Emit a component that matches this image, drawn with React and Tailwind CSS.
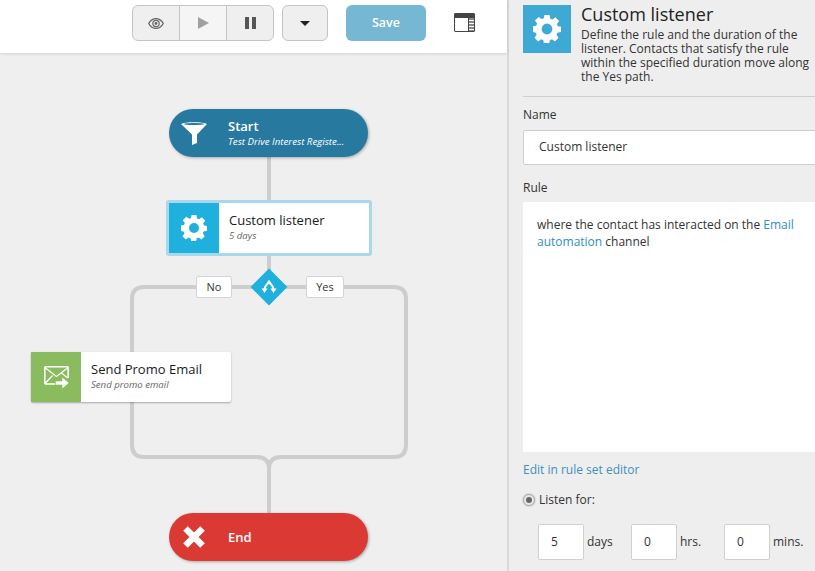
import React from 'react';

const font = { fontFamily: '"Open Sans", sans-serif' };

const Gear = ({ className }) => (
  <svg viewBox="0 0 26 26" className={className} fill="currentColor">
    <path
      fillRule="evenodd"
      d="M10.600 0h4.800l.6 3.400 2 .8 2.800-2 3.400 3.400-2 2.800.8 2 3 .6v4.800l-3.400.6-.8 2 2 2.800-3.400 3.400-2.800-2-2 .8-.6 3.400h-4.800l-.6-3.400-2-.8-2.800 2-3.400-3.400 2-2.800-.8-2-3-.6V10.600l3.400-.6.8-2-2-2.800 3.400-3.400 2.800 2 2-.8zM13 8a5 5 0 1 0 0 10 5 5 0 0 0 0-10z"
    />
  </svg>
);

const Funnel = () => (
  <svg viewBox="0 0 26 24" className="h-[24px] w-[26px]" fill="#fff">
    <path d="M0 3C3 .6 23 .6 26 3L16 13.500V22l-5 2V13.500z" />
    <ellipse cx="13" cy="3" rx="10" ry="1" fill="#27799f" />
  </svg>
);

const Branch = () => (
  <svg viewBox="0 0 16 16" className="h-[16px] w-[16px]" fill="none" stroke="#fff" strokeWidth="2">
    <path d="M8 1.500C8 5 3.500 6 3.500 10M8 1.500c0 3.500 4.500 4.500 4.500 8.500" />
    <path d="M.5 9.500h6L3.500 14zM9.500 9.500h6L12.500 14z" fill="#fff" stroke="none" />
  </svg>
);

const MailSend = () => (
  <svg viewBox="0 0 25 23" className="h-[23px] w-[25px]" fill="none" stroke="#fff" strokeWidth="1.600">
    <path d="M12 18H1.800a1 1 0 0 1-1-1V1.800a1 1 0 0 1 1-1h21.400a1 1 0 0 1 1 1V12" />
    <path d="M1.500 2l11 8.500L23.500 2M1.500 17l7-7.500M23.500 12l-6.500-5.500" strokeWidth="1.200" />
    <path d="M11.500 15h6.500v-4l7 6-7 6v-4h-6.500z" fill="#fff" stroke="#8abb5e" strokeWidth=".6" />
  </svg>
);

const EyeIcon = () => (
  <svg viewBox="0 0 16 11" className="h-[11px] w-[16px]" fill="none" stroke="#666">
    <path d="M.7 5.500C3 1.500 5.500.6 8 .6s5 .9 7.300 4.900C13 9.500 10.500 10.400 8 10.400S3 9.500.7 5.500z" strokeWidth="1.300" />
    <circle cx="8" cy="5.500" r="3.200" strokeWidth="1.200" />
    <circle cx="8" cy="5.500" r="1.400" fill="#666" stroke="none" />
  </svg>
);

// node on the flow canvas
const ActionNode = ({ className, iconBg, icon, title, sub }) => (
  <div className={`absolute flex bg-white ${className}`}>
    <div className={`flex w-[50px] shrink-0 items-center justify-center ${iconBg}`}>{icon}</div>
    <div className="flex flex-col pl-[10px] pt-[8px]">
      <span className="text-[13px] leading-[18px] text-[#1a1a1a]">{title}</span>
      <span className="text-[9.600px] italic leading-[14px] text-[#666]">{sub}</span>
    </div>
  </div>
);

const BranchLabel = ({ className, children }) => (
  <div className={`absolute top-[223px] flex h-[22px] items-center justify-center rounded-[2px] border border-[#d4d4d4] bg-white text-[11px] text-[#333] ${className}`}>
    {children}
  </div>
);

const TimeField = ({ value, unit, unitWidth }) => (
  <div className="flex items-center">
    <div className="flex h-[36px] w-[46px] items-center rounded-[2px] border border-[#d0d0d0] bg-white pl-[12px] text-[12px] text-[#333]">
      {value}
    </div>
    <span className={`pl-[3px] text-[12px] text-[#333] ${unitWidth}`}>{unit}</span>
  </div>
);

export default function App() {
  return (
    <div className="flex h-[571px] w-[815px] overflow-hidden bg-[#efefef]" style={font}>
      <div className="flex w-[507px] shrink-0 flex-col">
        <div className="z-10 flex h-[53px] shrink-0 items-start bg-white pl-[132px] pt-[5px] shadow-[0_1px_3px_rgba(0,0,0,0.12)]">
          <div className="flex h-[36px] w-[142px] overflow-hidden rounded-[6px] border border-[#c4c4c4] bg-[#efefef]">
            <div className="flex w-[47px] items-center justify-center border-r border-[#c4c4c4]">
              <EyeIcon />
            </div>
            <div className="flex w-[47px] items-center justify-center border-r border-[#c4c4c4] bg-[#f5f5f5]">
              <svg viewBox="0 0 11 12" className="h-[12px] w-[11px]" fill="#a0a0a0">
                <path d="M0 0l11 6-11 6z" />
              </svg>
            </div>
            <div className="flex flex-1 items-center justify-center">
              <svg viewBox="0 0 11 12" className="h-[12px] w-[11px]" fill="#555">
                <path d="M0 0h4v12H0zM7 0h4v12H7z" />
              </svg>
            </div>
          </div>
          <div className="ml-[8px] flex h-[36px] w-[46px] items-center justify-center rounded-[6px] border border-[#c4c4c4] bg-[#efefef]">
            <div className="h-0 w-0 border-x-[5.500px] border-t-[5px] border-x-transparent border-t-[#222]" />
          </div>
          <div className="ml-[18px] flex h-[36px] w-[80px] items-center justify-center rounded-[6px] bg-[#76b7d4] text-[12.500px] font-semibold text-white">
            Save
          </div>
          <div className="ml-[28px] mt-[8px] flex h-[19px] w-[21px] flex-col rounded-[1px] border border-[#444] bg-white">
            <div className="h-[4px] bg-[#444]" />
            <div className="ml-auto w-[6px] flex-1 border-l border-[#444] bg-[repeating-linear-gradient(#888_0,#888_2px,#fff_2px,#fff_3px)]" />
          </div>
        </div>

        <div className="relative flex-1">
          <svg className="absolute inset-0 h-full w-full" fill="none" stroke="#cdcdcd" strokeWidth="4">
            <path d="M269 100V234" />
            <path d="M269 234H144Q132 234 132 246V392Q132 404 144 404H257Q269 404 269 416V462" />
            <path d="M269 234H394Q406 234 406 246V392Q406 404 394 404H281Q269 404 269 416" />
          </svg>

          <div className="absolute left-[169px] top-[56px] flex h-[48px] w-[199px] items-center rounded-[24px] bg-[#27799f] pl-[12px] shadow-[1px_1px_3px_rgba(0,0,0,0.3)]">
            <Funnel />
            <div className="flex flex-col pb-[1px] pl-[21px] text-white">
              <span className="text-[13px] font-semibold leading-[17px]">Start</span>
              <span className="text-[9.700px] italic leading-[13px]">Test Drive Interest Registe...</span>
            </div>
          </div>

          <ActionNode
            className="left-[166px] top-[147px] h-[56px] w-[206px] rounded-[3px] border-[3px] border-[#a8d8ec]"
            iconBg="bg-[#1fb0dd]"
            icon={<Gear className="h-[26px] w-[26px] text-white" />}
            title="Custom listener"
            sub="5 days"
          />

          <div className="absolute left-[251px] top-[216px] flex h-[36px] w-[36px] items-center justify-center">
            <div className="absolute h-[26px] w-[26px] rotate-45 bg-[#1fb0dd]" />
            <div className="relative"><Branch /></div>
          </div>
          <BranchLabel className="left-[196px] w-[36px]">No</BranchLabel>
          <BranchLabel className="left-[306px] w-[38px]">Yes</BranchLabel>

          <ActionNode
            className="left-[31px] top-[299px] h-[50px] w-[200px] rounded-[2px] shadow-[0_1px_2px_rgba(0,0,0,0.3)]"
            iconBg="bg-[#8abb5e]"
            icon={<MailSend />}
            title="Send Promo Email"
            sub="Send promo email"
          />

          <div className="absolute left-[169px] top-[460px] flex h-[48px] w-[199px] items-center rounded-[24px] bg-[#db3a34] pl-[13px] shadow-[1px_1px_3px_rgba(0,0,0,0.3)]">
            <svg viewBox="0 0 24 24" className="h-[24px] w-[24px]" fill="none" stroke="#fff" strokeWidth="6.500">
              <path d="M3.500 3.500l17 17M20.500 3.500l-17 17" />
            </svg>
            <span className="pl-[22px] pt-[2px] text-[13px] font-semibold text-white">End</span>
          </div>
        </div>
      </div>

      <div className="flex min-w-0 flex-1 flex-col border-l-2 border-[#d9d9d9] bg-[#eeeeee] pl-[14px]">
        <div className="mr-[-1px] flex h-[97px] shrink-0 border-b border-[#cfcfcf] pt-[4px]">
          <div className="mt-[1px] flex h-[48px] w-[48px] shrink-0 items-center justify-center bg-[#3fa9d6]">
            <Gear className="h-[28px] w-[28px] text-white" />
          </div>
          <div className="pl-[10px]">
            <div className="text-[18px] leading-[20px] text-[#222]">Custom listener</div>
            <div className="w-[234px] pt-[4px] text-[12px] leading-[14px] text-[#333]">
              Define the rule and the duration of the listener. Contacts that satisfy the rule within the specified duration move along the Yes path.
            </div>
          </div>
        </div>

        <div className="pt-[9px] text-[12px] leading-[17px] text-[#333]">Name</div>
        <div className="mt-[7px] flex h-[35px] w-[300px] shrink-0 items-center rounded-[2px] border border-[#cfcfcf] bg-white pb-[2px] pl-[15px] text-[12px] text-[#333]">
          Custom listener
        </div>

        <div className="pt-[14px] text-[12px] leading-[17px] text-[#333]">Rule</div>
        <div className="mt-[6px] h-[250px] w-[300px] shrink-0 bg-white px-[14px] pt-[14px] text-[12px] leading-[17px] text-[#333]">
          <div className="w-[265px]">
            where the contact has interacted on the <span className="text-[#2e8fc0]">Email automation</span> channel
          </div>
        </div>

        <div className="pt-[9px] text-[12px] leading-[17px] text-[#3d91bd]">Edit in rule set editor</div>

        <div className="flex items-center pt-[13px] text-[12px] leading-[17px] text-[#333]">
          <div className="flex h-[12px] w-[12px] items-center justify-center rounded-full border border-[#aaa] bg-[#e8e8e8] shadow-[0_0_2px_rgba(0,0,0,0.3)]">
            <div className="h-[6px] w-[6px] rounded-full bg-[#666]" />
          </div>
          <span className="pl-[4px]">Listen for:</span>
        </div>

        <div className="flex pl-[15px] pt-[16px]">
          <TimeField value="5" unit="days" unitWidth="w-[47px]" />
          <TimeField value="0" unit="hrs." unitWidth="w-[47px]" />
          <TimeField value="0" unit="mins." unitWidth="w-[45px]" />
        </div>
      </div>
    </div>
  );
}
